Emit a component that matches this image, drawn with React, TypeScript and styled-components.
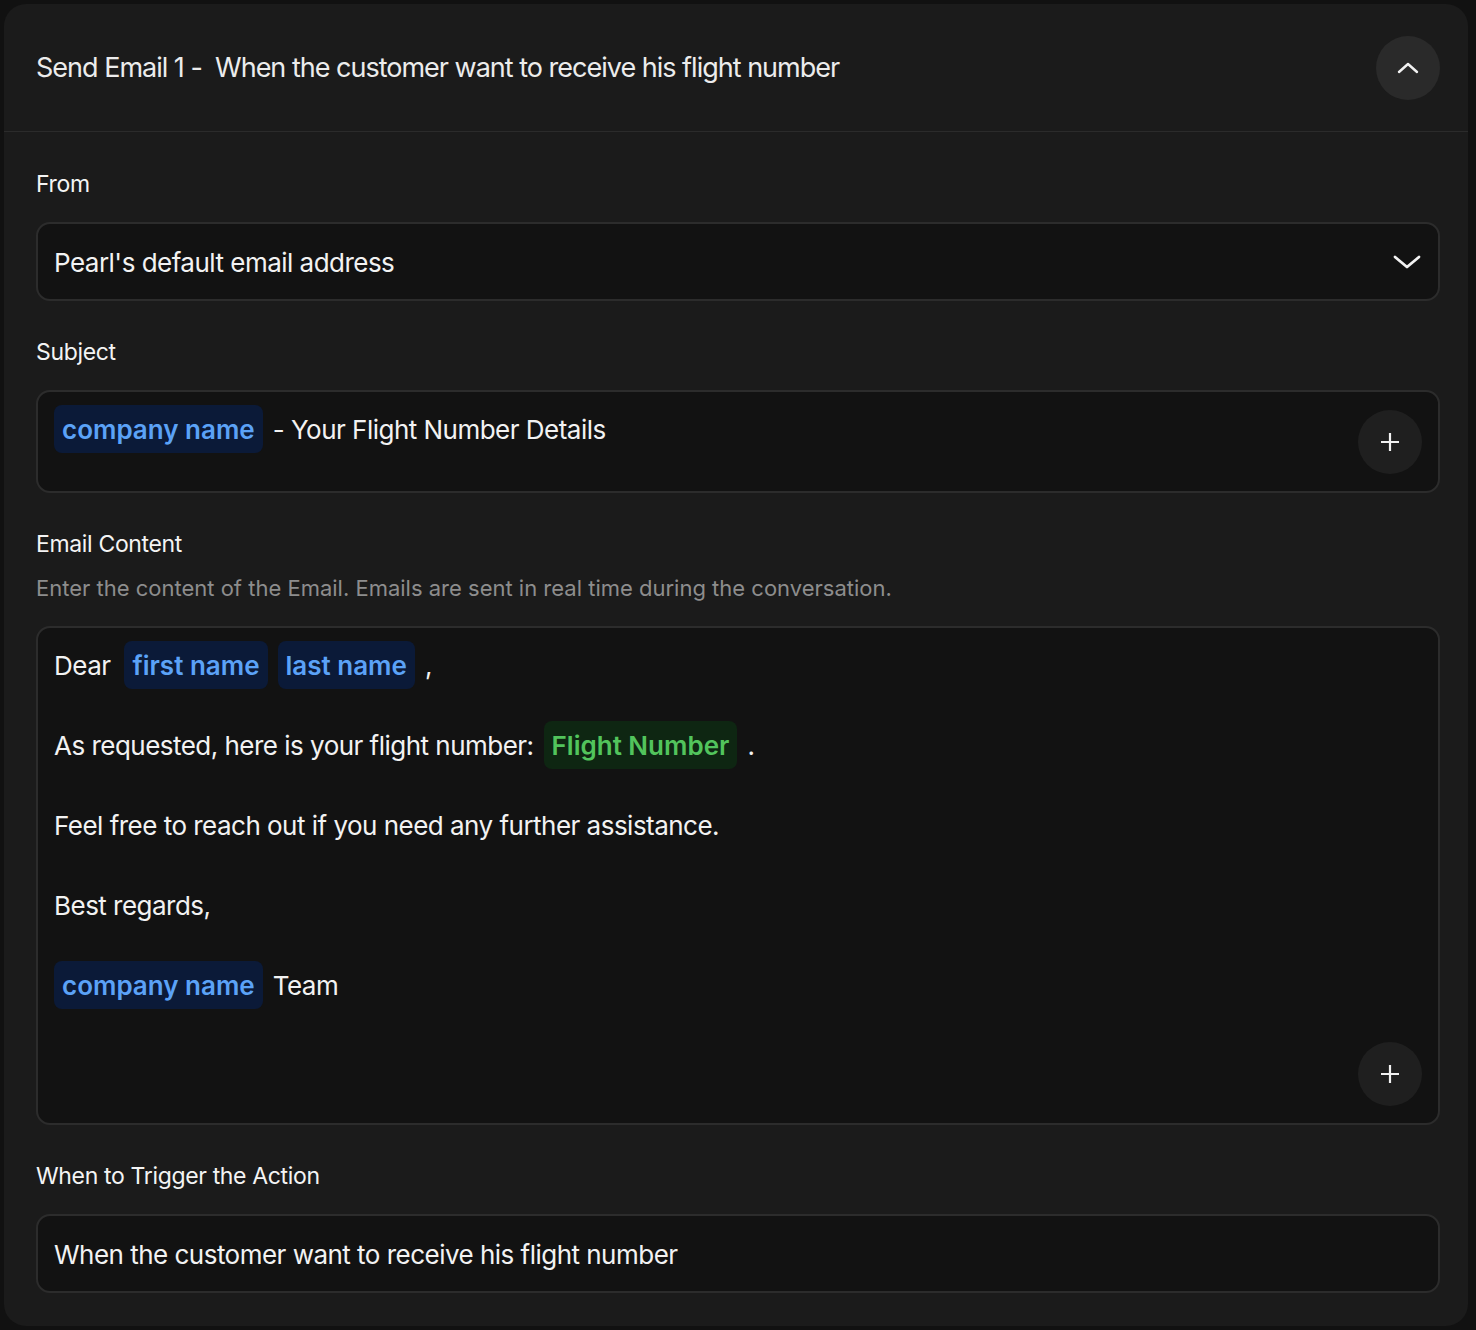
import React from 'react';
import styled, { createGlobalStyle } from 'styled-components';

const GlobalStyle = createGlobalStyle`
  html, body {
    margin: 0;
    padding: 0;
    background: #111111;
  }
  body {
    font-family: Inter, "Noto Sans", sans-serif;
    color: #f2f2f2;
    -webkit-font-smoothing: antialiased;
  }
`;

const Page = styled.div`
  padding: 4px 8px 4px 4px;
  min-height: 1330px;
  box-sizing: border-box;
`;

const Card = styled.section`
  background: #1b1b1b;
  border-radius: 22px;
  overflow: hidden;
`;

const Header = styled.header`
  height: 128px;
  box-sizing: border-box;
  padding: 0 28px 0 32px;
  display: flex;
  align-items: center;
  justify-content: space-between;
  border-bottom: 1px solid #2b2b2b;
`;

const Title = styled.h2`
  margin: 0;
  font-size: 27px;
  font-weight: 400;
  letter-spacing: -0.037em;
  color: #ececec;
  white-space: pre;
`;

const RoundButton = styled.button<{ $tone: 'header' | 'field' }>`
  width: 64px;
  height: 64px;
  border-radius: 50%;
  border: none;
  padding: 0;
  display: flex;
  align-items: center;
  justify-content: center;
  flex-shrink: 0;
  background: ${(p) => (p.$tone === 'header' ? '#2a2a2a' : '#1f1f1f')};
  color: #f2f2f2;
  cursor: pointer;
`;

const Body = styled.div`
  padding: 38px 28px 33px 32px;
  display: flex;
  flex-direction: column;
  gap: 37px;
`;

const Field = styled.div`
  display: flex;
  flex-direction: column;
`;

const Label = styled.div`
  font-size: 23px;
  line-height: 28px;
  font-weight: 400;
  letter-spacing: -0.015em;
  color: #f4f4f4;
`;

const Hint = styled.div`
  margin-top: 16px;
  font-size: 22px;
  line-height: 28px;
  letter-spacing: 0;
  color: #8d8d8d;
`;

const Box = styled.div<{ $minHeight: number }>`
  margin-top: 24px;
  min-height: ${(p) => p.$minHeight}px;
  box-sizing: border-box;
  background: #121212;
  border: 2px solid #2c2c2c;
  border-radius: 14px;
  font-size: 26px;
  letter-spacing: -0.02em;
  color: #f2f2f2;
`;

const SelectBox = styled(Box)`
  display: flex;
  align-items: center;
  justify-content: space-between;
  padding: 1px 16px 0 16px;
`;

const TextBox = styled(Box)`
  display: flex;
  align-items: center;
  padding: 1px 16px 0;
`;

const RichBox = styled(Box)`
  display: flex;
  justify-content: space-between;
  padding: 13px 16px 17px 16px;
`;

const Lines = styled.div`
  display: flex;
  flex-direction: column;
  gap: 32px;
`;

const Line = styled.div`
  height: 48px;
  display: flex;
  align-items: center;
  gap: 10px;
  white-space: pre;
`;

const Word = styled.span<{ $pad?: number }>`
  margin-right: ${(p) => p.$pad ?? 0}px;
`;

const Chip = styled.span<{ $color: 'blue' | 'green' }>`
  height: 48px;
  display: inline-flex;
  align-items: center;
  padding: 0 8px;
  border-radius: 8px;
  font-weight: 600;
  letter-spacing: 0;
  background: ${(p) => (p.$color === 'blue' ? '#0b1a38' : '#0e2612')};
  color: ${(p) => (p.$color === 'blue' ? '#5ba2f7' : '#52c45c')};
`;

const EndButton = styled.div`
  align-self: flex-end;
`;

const ChevronUp = () => (
  <svg width="24" height="24" viewBox="0 0 24 24" fill="none" stroke="currentColor" strokeWidth="2.4" strokeLinecap="round" strokeLinejoin="round">
    <path d="M3 16 L12 8 L21 16" />
  </svg>
);

const ChevronDown = () => (
  <svg width="30" height="30" viewBox="0 0 30 30" fill="none" stroke="currentColor" strokeWidth="2.8" strokeLinecap="round" strokeLinejoin="round">
    <path d="M3 10 L15 20 L27 10" />
  </svg>
);

const Plus = () => (
  <svg width="20" height="20" viewBox="0 0 20 20" fill="none" stroke="currentColor" strokeWidth="2.2" strokeLinecap="butt">
    <path d="M10 1 V19 M1 10 H19" />
  </svg>
);

const App: React.FC = () => (
  <>
    <GlobalStyle />
    <Page>
      <Card>
        <Header>
          <Title>{'Send Email 1 -  When the customer want to receive his flight number'}</Title>
          <RoundButton $tone="header" aria-label="Collapse">
            <ChevronUp />
          </RoundButton>
        </Header>
        <Body>
          <Field>
            <Label>From</Label>
            <SelectBox $minHeight={79}>
              <span>Pearl's default email address</span>
              <ChevronDown />
            </SelectBox>
          </Field>

          <Field>
            <Label>Subject</Label>
            <RichBox $minHeight={103}>
              <Line>
                <Chip $color="blue">company name</Chip>
                <span>- Your Flight Number Details</span>
              </Line>
              <EndButton>
                <RoundButton $tone="field" aria-label="Add variable">
                  <Plus />
                </RoundButton>
              </EndButton>
            </RichBox>
          </Field>

          <Field>
            <Label>Email Content</Label>
            <Hint>Enter the content of the Email. Emails are sent in real time during the conversation.</Hint>
            <RichBox $minHeight={499}>
              <Lines>
                <Line>
                  <Word $pad={4}>Dear</Word>
                  <Chip $color="blue">first name</Chip>
                  <Chip $color="blue">last name</Chip>
                  <Word>,</Word>
                </Line>
                <Line>
                  <Word>As requested, here is your flight number:</Word>
                  <Chip $color="green">Flight Number</Chip>
                  <Word>.</Word>
                </Line>
                <Line>Feel free to reach out if you need any further assistance.</Line>
                <Line>Best regards,</Line>
                <Line>
                  <Chip $color="blue">company name</Chip>
                  <Word>Team</Word>
                </Line>
              </Lines>
              <EndButton>
                <RoundButton $tone="field" aria-label="Add variable">
                  <Plus />
                </RoundButton>
              </EndButton>
            </RichBox>
          </Field>

          <Field>
            <Label>When to Trigger the Action</Label>
            <TextBox $minHeight={79}>When the customer want to receive his flight number</TextBox>
          </Field>
        </Body>
      </Card>
    </Page>
  </>
);

export default App;
